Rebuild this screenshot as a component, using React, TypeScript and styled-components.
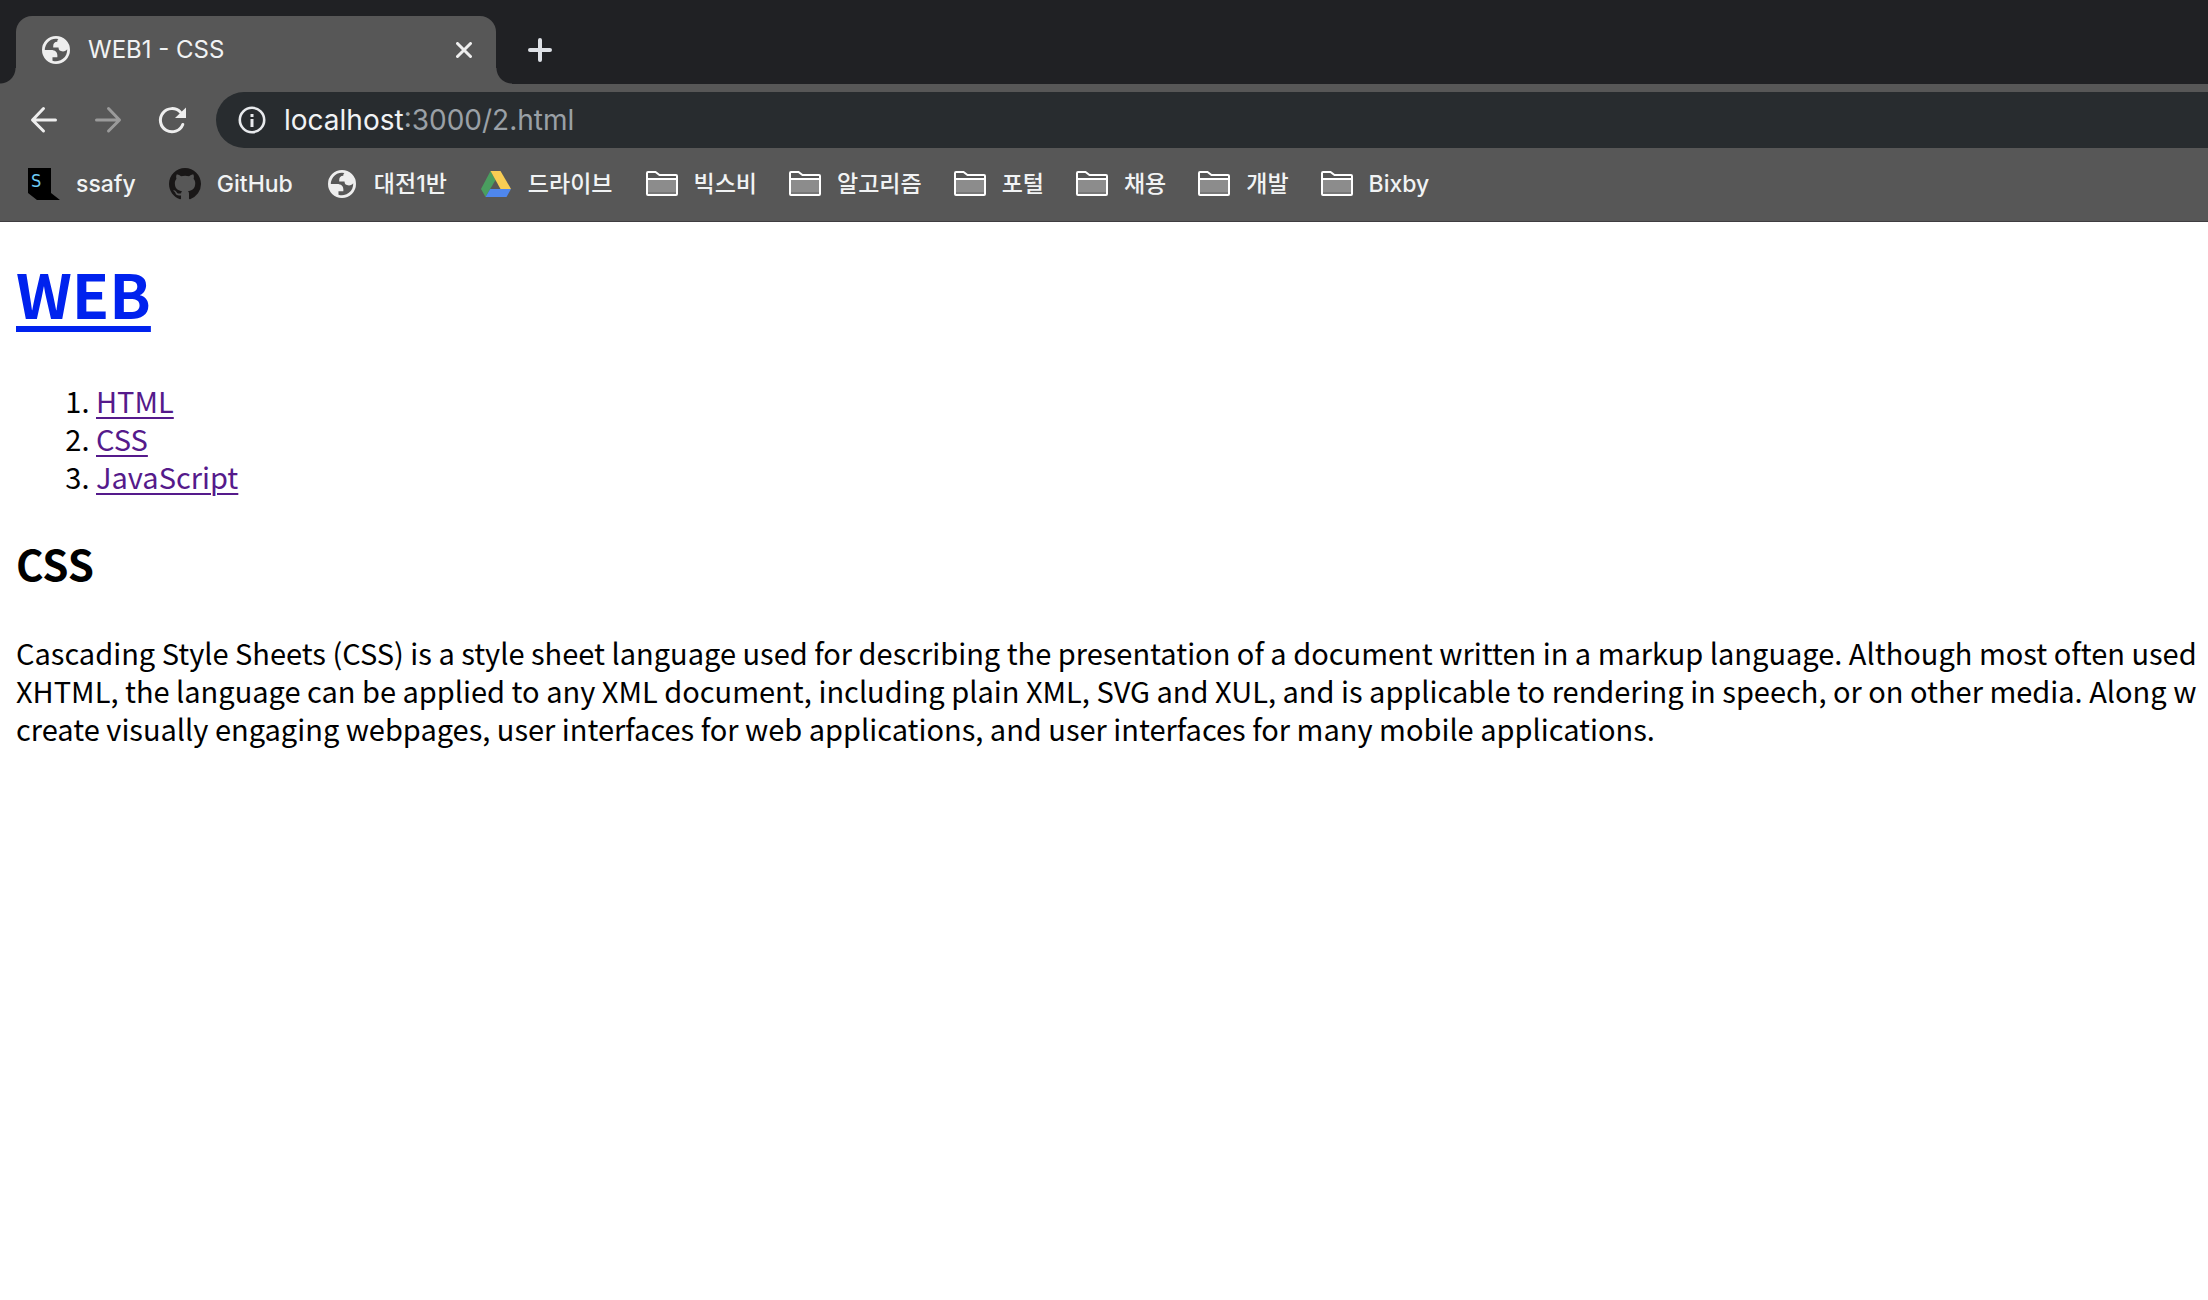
import React from "react";
import styled, { createGlobalStyle } from "styled-components";

const colors = {
  frame: "#202124",
  chrome: "#575757",
  field: "#282c2f",
  icon: "#eeeeee",
  label: "#f1f3f4",
  dim: "#9aa0a6",
  edge: "#3f3d40",
  link: "#0022ee",
  visited: "#551a8b",
};

const uiFont = `Inter, "Noto Sans CJK KR", sans-serif`;
const pageFont = `"Noto Sans CJK KR", "Noto Sans", sans-serif`;

const GlobalStyle = createGlobalStyle`
  *, *::before, *::after { box-sizing: border-box; }
  body { margin: 0; background: #fff; }
  svg { display: block; flex: none; }
`;

const Window = styled.div`
  display: flex;
  flex-direction: column;
  overflow: hidden;
`;

const TabStrip = styled.header`
  display: flex;
  align-items: stretch;
  padding: 16px 16px 0;
  background: ${colors.frame};
  font-family: ${uiFont};
`;

const Tab = styled.div`
  position: relative;
  display: flex;
  align-items: center;
  gap: 18px;
  width: 480px;
  height: 68px;
  padding: 0 24px 0 26px;
  border-radius: 16px 16px 0 0;
  background: ${colors.chrome};

  &::before,
  &::after {
    content: "";
    position: absolute;
    bottom: 0;
    width: 16px;
    height: 16px;
  }
  &::before {
    right: 100%;
    background: radial-gradient(circle at 0 0, transparent 15px, ${colors.chrome} 16px);
  }
  &::after {
    left: 100%;
    background: radial-gradient(circle at 100% 0, transparent 15px, ${colors.chrome} 16px);
  }
`;

const TabTitle = styled.span`
  flex: 1;
  color: ${colors.label};
  font-size: 24px;
  line-height: 32px;
  white-space: nowrap;
`;

const IconButton = styled.button`
  display: flex;
  align-items: center;
  justify-content: center;
  padding: 0;
  border: 0;
  background: none;
  color: ${colors.icon};
  &:disabled {
    color: #9b9b9b;
  }
`;

const NewTabButton = styled(IconButton)`
  margin-left: 32px;
`;

const Toolbar = styled.div`
  display: flex;
  align-items: center;
  padding: 8px 0 0 28px;
  background: ${colors.chrome};
`;

const NavButtons = styled.nav`
  display: flex;
  gap: 32px;
  padding-right: 28px;
`;

const AddressBar = styled.form`
  flex: 1;
  display: flex;
  align-items: center;
  height: 56px;
  padding-left: 22px;
  border-radius: 28px 0 0 28px;
  background: ${colors.field};
  font-family: ${uiFont};
  font-size: 28px;
  line-height: 36px;
`;

const Host = styled.label`
  padding-left: 18px;
  color: ${colors.label};
`;

const PathInput = styled.input`
  flex: 1;
  min-width: 0;
  padding: 0;
  border: 0;
  outline: 0;
  background: none;
  color: ${colors.dim};
  font: inherit;
`;

const BookmarkBar = styled.nav`
  display: flex;
  align-items: center;
  gap: 32px;
  padding: 20px 28px 21px;
  border-bottom: 1px solid ${colors.edge};
  background: ${colors.chrome};
`;

const bookmarkLook = `
  display: flex;
  align-items: center;
  gap: 16px;
  height: 32px;
  padding: 0;
  border: 0;
  background: none;
  color: ${colors.label};
  font-family: ${uiFont};
  font-size: 23px;
  font-weight: 500;
  line-height: 32px;
  white-space: nowrap;
  text-decoration: none;
`;

const BookmarkLink = styled.a`
  ${bookmarkLook}
  padding-right: 1px;
`;

const BookmarkFolder = styled.button`
  ${bookmarkLook}
`;

const Page = styled.main`
  padding: 32px 16px;
  background: #fff;
  color: #000;
  font-family: ${pageFont};
  font-size: 29px;
  line-height: 38px;
`;

const SiteTitle = styled.h1`
  margin: 0;
  font-size: 61px;
  line-height: 78px;
`;

const HomeLink = styled.a`
  color: ${colors.link};
  text-decoration-thickness: 6px;
  text-underline-offset: 7px;
`;

const Topics = styled.ol`
  margin: 49px 0 0;
  padding-left: 80px;
`;

const TopicLink = styled.a`
  color: ${colors.visited};
  text-decoration-thickness: 2px;
  text-underline-offset: 4px;
`;

const TopicTitle = styled.h2`
  margin: 40px 0 0;
  font-size: 42px;
  line-height: 56px;
`;

const Description = styled.p`
  margin: 42px 0 0;
  white-space: nowrap;
`;

const Globe = ({ size }: { size: number }) => (
  <svg width={size} height={size} viewBox="2 2 20 20" aria-hidden="true">
    <path
      fill={colors.icon}
      fillRule="evenodd"
      d="M12 2a10 10 0 1 0 0 20 10 10 0 0 0 0-20zM4 12h4.4c3.407.022 4.922 1.73 4.543 5.127H9.488v2.47a8.004 8.004 0 0 0 10.498-8.083C19.327 12.504 18.332 13 17 13c-2.137 0-3.206-.916-3.206-2.75h-3.748c-.274-2.728.683-4.092 2.87-4.092 0-.975.327-1.597.811-1.97A8.004 8.004 0 0 0 4 12z"
    />
  </svg>
);

const IconSlot = styled.span`
  display: flex;
  align-items: center;
  justify-content: center;
  width: 32px;
`;

const CloseIcon = () => (
  <svg width="16" height="16" viewBox="0 0 16 16" fill="none" stroke="currentColor" strokeWidth="3" strokeLinecap="round">
    <path d="M1.5 1.5l13 13M14.5 1.5l-13 13" />
  </svg>
);

const PlusIcon = () => (
  <svg width="24" height="24" viewBox="0 0 24 24" fill="none" stroke="#dee1e6" strokeWidth="4" strokeLinecap="round">
    <path d="M12 2v20M2 12h20" />
  </svg>
);

const BackIcon = () => (
  <svg width="32" height="32" viewBox="0 0 32 32" fill="none" stroke="currentColor" strokeWidth="3" strokeLinecap="round" strokeLinejoin="round">
    <path d="M27.500 16H5M15.500 4.500L4.500 16l11 11" />
  </svg>
);

const ForwardIcon = () => (
  <svg width="32" height="32" viewBox="0 0 32 32" fill="none" stroke="currentColor" strokeWidth="3" strokeLinecap="round" strokeLinejoin="round">
    <path d="M4.500 16H27M16.500 4.500l11 11.500-11 11" />
  </svg>
);

const ReloadIcon = () => (
  <svg width="32" height="32" viewBox="0 0 32 32" fill="none">
    <path d="M26.800 20.500A11.600 11.600 0 1 1 24.500 8.300" stroke="currentColor" strokeWidth="3" strokeLinecap="round" />
    <path d="M30 3.500V14H19z" fill="currentColor" />
  </svg>
);

const InfoIcon = () => (
  <svg width="28" height="28" viewBox="0 0 28 28" fill="none" aria-hidden="true">
    <circle cx="14" cy="14" r="12.200" stroke="#e8eaed" strokeWidth="2.600" />
    <path d="M12.500 8h3v3h-3zM12.500 13h3v8h-3z" fill="#e8eaed" />
  </svg>
);

const SsafyIcon = () => (
  <svg width="32" height="32" viewBox="0 0 32 32" aria-hidden="true">
    <path d="M0 0h23v25l9 7H9l-9-7z" fill="#000" />
    <text x="3" y="19" fill="#6fcbf5" fontFamily="DejaVu Sans Condensed, sans-serif" fontSize="18">S</text>
  </svg>
);

const GitHubIcon = () => (
  <svg width="32" height="32" viewBox="0 0 16 16" fill="#191717" aria-hidden="true">
    <path d="M8 0C3.58 0 0 3.58 0 8c0 3.54 2.29 6.53 5.47 7.59.4.07.55-.17.55-.38 0-.19-.01-.82-.01-1.49-2.01.37-2.53-.49-2.69-.94-.09-.23-.48-.94-.82-1.13-.28-.15-.68-.52-.01-.53.63-.01 1.08.58 1.23.82.72 1.21 1.87.87 2.33.66.07-.52.28-.87.51-1.07-1.78-.2-3.64-.89-3.64-3.95 0-.87.31-1.59.82-2.15-.08-.2-.36-1.02.08-2.12 0 0 .67-.21 2.2.82.64-.18 1.32-.27 2-.27.68 0 1.36.09 2 .27 1.53-1.04 2.2-.82 2.2-.82.44 1.1.16 1.92.08 2.12.51.56.82 1.27.82 2.15 0 3.07-1.87 3.75-3.65 3.95.29.25.54.73.54 1.48 0 1.07-.01 1.93-.01 2.2 0 .21.15.46.55.38A8.013 8.013 0 0 0 16 8c0-4.42-3.58-8-8-8z" />
  </svg>
);

const DriveIcon = () => (
  <svg width="32" height="32" viewBox="0 0 32 32" aria-hidden="true">
    <path d="M10.500 3L1 21l4.500 8 10-17z" fill="#4a9e5f" />
    <path d="M10.500 3h10L31 21H20.500z" fill="#f8cd54" />
    <path d="M10.200 21H31l-4.500 8h-21z" fill="#4f87ed" />
  </svg>
);

const FolderIcon = () => (
  <svg width="32" height="32" viewBox="0 0 32 32" fill="none" aria-hidden="true">
    <path d="M2 12h28v12H2z" fill="#8c8c8c" />
    <path d="M2 24h28v2H2z" fill="#777" />
    <path d="M1 5q0-1 1-1h7.500l4 3H30q1 0 1 1v18q0 1-1 1H2q-1 0-1-1zM1 11h30" stroke="#fff" strokeWidth="2" />
  </svg>
);

const links = [
  { label: "ssafy", icon: <SsafyIcon /> },
  { label: "GitHub", icon: <GitHubIcon /> },
  { label: "대전1반", icon: <Globe size={28} /> },
  { label: "드라이브", icon: <DriveIcon /> },
];

const folders = ["빅스비", "알고리즘", "포털", "채용", "개발", "Bixby"];

const topics = ["HTML", "CSS", "JavaScript"];

export default function App() {
  return (
    <Window>
      <GlobalStyle />
      <TabStrip>
        <Tab>
          <Globe size={28} />
          <TabTitle>WEB1 - CSS</TabTitle>
          <IconButton type="button" aria-label="Close tab">
            <CloseIcon />
          </IconButton>
        </Tab>
        <NewTabButton type="button" aria-label="New tab">
          <PlusIcon />
        </NewTabButton>
      </TabStrip>
      <Toolbar>
        <NavButtons aria-label="History">
          <IconButton type="button" aria-label="Back">
            <BackIcon />
          </IconButton>
          <IconButton type="button" aria-label="Forward" disabled>
            <ForwardIcon />
          </IconButton>
          <IconButton type="button" aria-label="Reload">
            <ReloadIcon />
          </IconButton>
        </NavButtons>
        <AddressBar onSubmit={(e) => e.preventDefault()}>
          <InfoIcon />
          <Host htmlFor="path">localhost</Host>
          <PathInput id="path" defaultValue=":3000/2.html" />
        </AddressBar>
      </Toolbar>
      <BookmarkBar aria-label="Bookmarks">
        {links.map(({ label, icon }) => (
          <BookmarkLink key={label} href="#">
            <IconSlot>{icon}</IconSlot>
            {label}
          </BookmarkLink>
        ))}
        {folders.map((label) => (
          <BookmarkFolder key={label} type="button">
            <FolderIcon />
            {label}
          </BookmarkFolder>
        ))}
      </BookmarkBar>
      <Page>
        <SiteTitle>
          <HomeLink href="#">WEB</HomeLink>
        </SiteTitle>
        <Topics>
          {topics.map((topic) => (
            <li key={topic}>
              <TopicLink href="#">{topic}</TopicLink>
            </li>
          ))}
        </Topics>
        <TopicTitle>CSS</TopicTitle>
        <Description>
          Cascading Style Sheets (CSS) is a style sheet language used for describing the presentation of a document
          written in a markup language. Although most often used
          <br />
          XHTML, the language can be applied to any XML document, including plain XML, SVG and XUL, and is applicable
          to rendering in speech, or on other media. Along w
          <br />
          create visually engaging webpages, user interfaces for web applications, and user interfaces for many mobile
          applications.
        </Description>
      </Page>
    </Window>
  );
}
